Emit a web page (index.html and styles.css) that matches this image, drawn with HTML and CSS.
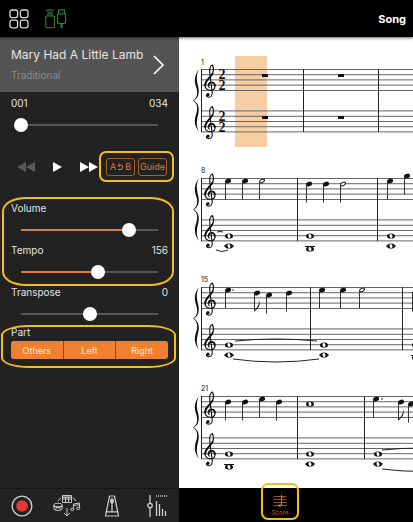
FILE: index.html
```
<!DOCTYPE html>
<html lang="en">
<head>
  <meta charset="UTF-8" />
  <meta name="viewport" content="width=device-width, initial-scale=1.0"/>
  <title>Song</title>
  <link rel="stylesheet" href="styles.css">
</head>
<body>
  <!-- Shared music symbols -->
  <svg class="symbols" aria-hidden="true">
    <defs>
      <g id="clef" fill="none" stroke="#111" stroke-linecap="round">
        <path stroke-width="1.1" d="M5.2 23.6C3.4 22 4.2 18 7.2 18C10.4 18 11.6 20.4 11 22.8C10.4 25.4 8.2 26.4 6 26.2C2.6 26 .6 23.4 .9 20.2C1.4 15.6 7 13 8.8 9C9.9 6.4 9.4 3 8.4 1C6.6 1.6 5.4 5 5.8 9L8.2 28.4C8.5 31.6 7 33.2 5 33.2C3.4 33.2 2.4 32.2 2.4 31"/>
        <path stroke-width="1.8" d="M1.3 21.5C1 16.6 6.6 13.4 8.6 9.4"/>
        <path stroke-width="1.6" d="M5 21C5.2 19 6.6 18.3 8 18.5C9.6 18.8 10.8 20.2 10.7 21.8"/>
        <circle cx="4" cy="30.7" r="1.6" fill="#111" stroke="none"/>
      </g>
      <path id="brace" fill="#111" d="M6 0C1 7 1 12 3.5 19C5 25 4 29 0 31.4C4 34 5 38 3.5 44C1 51 1 56 6 63C3 57 3.5 52 5.3 45C6.6 39 5.5 34 .8 31.4C5.5 29 6.6 24 5.3 18C3.5 11 3 6 6 0Z"/>
      <g id="system">
        <g class="lines">
          <rect x="22" y="30" width="100%" height="1"/>
          <rect x="22" y="35.2" width="100%" height="1"/>
          <rect x="22" y="40.4" width="100%" height="1"/>
          <rect x="22" y="45.6" width="100%" height="1"/>
          <rect x="22" y="51" width="100%" height="1"/>
          <rect x="22" y="71.4" width="100%" height="1"/>
          <rect x="22" y="76.8" width="100%" height="1"/>
          <rect x="22" y="82" width="100%" height="1"/>
          <rect x="22" y="87.2" width="100%" height="1"/>
          <rect x="22" y="92.4" width="100%" height="1"/>
        </g>
        <use href="#bar" x="22"/>
        <use href="#brace" x="14" y="30"/>
        <use href="#clef" x="25" y="25"/>
        <use href="#clef" x="25" y="66.5"/>
      </g>
      <rect id="bar" y="30" width="1" height="63" fill="#222"/>
      <g id="quarter">
        <ellipse rx="3.2" ry="2.3" transform="rotate(-25)"/>
        <rect x="-3" y="0" width="1" height="18.5" fill="#333"/>
      </g>
      <g id="eighth">
        <use href="#quarter"/>
        <path d="M-2.5 18.5C-1.5 14.5 3.5 13 1.6 6.5C4.4 12.5 1 15 -2.5 18.5Z"/>
      </g>
      <g id="half">
        <ellipse rx="2.7" ry="1.6" transform="rotate(-30)" fill="#fff" stroke="#111" stroke-width="1.1"/>
        <rect x="-3" y="0" width="1" height="18.5" fill="#333"/>
      </g>
      <g id="whole">
        <ellipse rx="4" ry="2.6"/>
        <ellipse rx="1.4" ry="2" transform="rotate(-20)" fill="#fff"/>
      </g>
      <g id="low-c">
        <rect x="-5" y="-.5" width="10" height="1"/>
        <use href="#whole"/>
      </g>
      <g id="low-b">
        <rect x="-5" y="-3" width="10" height="1"/>
        <use href="#whole"/>
      </g>
      <rect id="rest" width="6" height="3"/>
    </defs>
  </svg>

  <header class="topbar">
    <button class="icon-btn" aria-label="Menu">
      <svg width="20" height="20" fill="none" stroke="#d8d8d8" stroke-width="1.3">
        <rect x="1" y="1" width="7.6" height="7.6" rx="2"/>
        <rect x="11.4" y="1" width="7.6" height="7.6" rx="2"/>
        <rect x="1" y="11.2" width="7.6" height="7.6" rx="2"/>
        <rect x="11.4" y="11.2" width="7.6" height="7.6" rx="2"/>
      </svg>
    </button>
    <button class="icon-btn" aria-label="Connection">
      <svg width="22" height="20" fill="none" stroke="#2f8236" stroke-width="1.1">
        <path d="M1 1.8Q5 -.4 9 1.8M2.6 3.4Q5 2 7.4 3.4"/>
        <path d="M3 7V4.8H7V7M1.6 7H8.4Q9.4 7 9.4 8V17.4Q9.4 18.8 8 18.8H2Q.8 18.8 .8 17.4V8Q.8 7 1.6 7Z"/>
        <path d="M13.6 5V.8H19.6V5M12.6 5H20.6V12.4Q20.6 14.6 18.6 14.6H14.6Q12.6 14.6 12.6 12.4ZM15.2 2.4V3.6M18 2.4V3.6"/>
        <path stroke-width="2" d="M16.6 14.6V19"/>
      </svg>
    </button>
    <h1>Song</h1>
  </header>

  <main class="content">
    <section class="panel">
      <button class="song">
        <span class="song-text">
          <span class="song-title">Mary Had A Little Lamb</span>
          <span class="song-artist">Traditional</span>
        </span>
        <svg width="12" height="20" fill="none" stroke="#fff" stroke-width="1.6"><path d="M1 1L10 10L1 19"/></svg>
      </button>

      <div class="controls">
        <div class="row"><label for="position">001</label><span>034</span></div>
        <input type="range" id="position" min="1" max="34" value="1" style="--value: 0">

        <div class="transport">
          <button class="icon-btn" aria-label="Rewind">
            <svg width="18" height="10" fill="#5a5a5a"><path d="M9 0V10L0 5ZM18 0V10L9 5Z"/></svg>
          </button>
          <button class="icon-btn" aria-label="Play">
            <svg width="9" height="10" fill="#fff"><path d="M0 0V10L9 5Z"/></svg>
          </button>
          <button class="icon-btn" aria-label="Fast forward">
            <svg width="18" height="10" fill="#fff"><path d="M0 0V10L9 5ZM9 0V10L18 5Z"/></svg>
          </button>
          <div class="modes marked">
            <button class="mode" aria-label="A-B repeat">A<svg width="7" height="8" fill="none" stroke="currentColor"><path d="M1 6.5H4A2.2 2.2 0 0 0 4 2.2H1M2.8 .4L1 2.2L2.8 4"/></svg>B</button>
            <button class="mode">Guide</button>
          </div>
        </div>

        <div class="levels marked">
          <div class="row"><label for="volume">Volume</label></div>
          <input type="range" id="volume" class="filled" min="0" max="100" value="79" style="--value: 79">
          <div class="row"><label for="tempo">Tempo</label><span>156</span></div>
          <input type="range" id="tempo" class="filled" min="0" max="100" value="56" style="--value: 56">
        </div>

        <div class="row"><label for="transpose">Transpose</label><span>0</span></div>
        <input type="range" id="transpose" min="-12" max="12" value="0" style="--value: 50">

        <div class="parts marked">
          <div class="parts-label" id="partLabel">Part</div>
          <div class="segments" role="group" aria-labelledby="partLabel">
            <button aria-pressed="true">Others</button>
            <button aria-pressed="true">Left</button>
            <button aria-pressed="true">Right</button>
          </div>
        </div>
      </div>
    </section>

    <section class="score" aria-label="Score">
      <svg class="staff">
        <rect x="56" y="17" width="32" height="91" fill="#f7cda3"/>
        <use href="#system"/>
        <text x="22" y="26">1</text>
        <g class="time">
          <text x="43" y="40">2</text>
          <text x="43" y="51">2</text>
          <text x="43" y="82">2</text>
          <text x="43" y="93">2</text>
        </g>
        <use href="#bar" x="124"/>
        <use href="#bar" x="199"/>
        <use href="#rest" x="83" y="35"/>
        <use href="#rest" x="159" y="35"/>
        <use href="#rest" x="83" y="77"/>
        <use href="#rest" x="159" y="77"/>
      </svg>

      <svg class="staff">
        <use href="#system"/>
        <text x="22" y="25">8</text>
        <use href="#quarter" x="49" y="33"/>
        <use href="#quarter" x="66" y="33"/>
        <use href="#half" x="83" y="33"/>
        <use href="#bar" x="118"/>
        <use href="#quarter" x="130" y="36"/>
        <use href="#quarter" x="147" y="36"/>
        <use href="#half" x="164" y="36"/>
        <use href="#bar" x="198"/>
        <use href="#quarter" x="211" y="33"/>
        <use href="#quarter" x="228" y="28"/>
        <use href="#whole" x="50" y="88"/>
        <use href="#low-c" x="50" y="98"/>
        <use href="#whole" x="131" y="88"/>
        <use href="#low-b" x="131" y="101"/>
        <use href="#whole" x="212" y="88"/>
        <use href="#low-c" x="212" y="98"/>
        <path class="tie" d="M38 84Q41 83 44 84M37 102Q43 105 49 102"/>
      </svg>

      <svg class="staff">
        <use href="#system"/>
        <text x="22" y="25">15</text>
        <use href="#quarter" x="49" y="33"/>
        <circle cx="54" cy="33" r=".8"/>
        <use href="#eighth" x="78" y="36"/>
        <use href="#quarter" x="90" y="38"/>
        <use href="#quarter" x="110" y="36"/>
        <use href="#bar" x="131"/>
        <use href="#quarter" x="143" y="33"/>
        <use href="#quarter" x="164" y="33"/>
        <use href="#half" x="183" y="33"/>
        <use href="#bar" x="223"/>
        <use href="#quarter" x="236" y="36"/>
        <use href="#whole" x="50" y="88"/>
        <use href="#low-c" x="50" y="98"/>
        <use href="#whole" x="145" y="88"/>
        <use href="#low-c" x="145" y="98"/>
        <use href="#whole" x="237" y="88"/>
        <use href="#low-b" x="237" y="101"/>
        <path class="tie" d="M56 84Q97 80 138 84M54 102Q97 108 140 102"/>
      </svg>

      <svg class="staff">
        <use href="#system"/>
        <text x="22" y="25">21</text>
        <use href="#quarter" x="49" y="36"/>
        <use href="#quarter" x="66" y="36"/>
        <use href="#quarter" x="83" y="33"/>
        <use href="#quarter" x="100" y="36"/>
        <use href="#bar" x="118"/>
        <use href="#whole" x="131" y="38"/>
        <use href="#bar" x="185"/>
        <use href="#quarter" x="197" y="33"/>
        <circle cx="203" cy="33" r=".8"/>
        <use href="#eighth" x="222" y="36"/>
        <use href="#quarter" x="232" y="38"/>
        <use href="#whole" x="50" y="88"/>
        <use href="#low-b" x="50" y="101"/>
        <use href="#whole" x="131" y="88"/>
        <use href="#low-c" x="131" y="98"/>
        <use href="#whole" x="199" y="88"/>
        <use href="#low-c" x="199" y="98"/>
        <path class="tie" d="M203 84Q243 80 283 84M203 103Q243 108 283 103"/>
      </svg>
    </section>
  </main>

  <footer class="bottombar">
    <nav class="tools" aria-label="Tools">
      <button class="icon-btn" aria-label="Record">
        <svg width="22" height="22"><circle cx="11" cy="11" r="9.8" fill="none" stroke="#d4d4d4" stroke-width="1.3"/><circle cx="11" cy="11" r="5.8" fill="#ee3535"/></svg>
      </button>
      <button class="icon-btn" aria-label="Instruments">
        <svg width="28" height="22" fill="none" stroke="#c6c6c6">
          <path d="M9.5 .5H18.5V7.5H9.5ZM9.5 2H18.5M12.5 2V7.5M15.5 2V7.5M11 2V5M14 2V5M17 2V5M8 2.5L5 6M20 2.5L23 6"/>
          <ellipse cx="5" cy="10" rx="4.2" ry="1.8"/>
          <path d="M.8 10V13.5Q1 15.5 5 15.5T9.2 13.5V10M.8 11.5Q5 14 9.2 11.5M2.5 14.5L4 12M7.5 14.5L6 12"/>
          <path d="M20.5 14.2V9L26.5 8V13.2M20.5 10.6L26.5 9.6M14 13V21M11 18L14 21L17 18"/>
          <ellipse cx="19.2" cy="14.4" rx="1.6" ry="1.2"/><ellipse cx="25.2" cy="13.4" rx="1.6" ry="1.2"/>
        </svg>
      </button>
      <button class="icon-btn" aria-label="Metronome">
        <svg width="16" height="22" fill="none" stroke="#d0d0d0" stroke-width="1.2">
          <path d="M5.5 1H10.5L14.5 21H1.5ZM2.4 16.8H13.6M8 3V16.8"/><path fill="#d0d0d0" d="M6.5 5H9.5L8.8 8H7.2Z"/>
        </svg>
      </button>
      <button class="icon-btn" aria-label="Mixer">
        <svg width="20" height="22" fill="none" stroke="#d0d0d0" stroke-width="1.3">
          <path d="M3 0V8M3 13V22"/><circle cx="3" cy="10.5" r="2.2"/>
          <path d="M9.5 6V21M12.5 9V21M15.5 14V21M18.5 16V21"/>
          <path stroke-dasharray="1 1" d="M9 1H20"/>
        </svg>
      </button>
    </nav>
    <nav class="views" aria-label="Views">
      <button class="view marked">
        <svg width="14" height="13" fill="none" stroke="#9c5122">
          <path d="M.5 1.5H13.5M.5 4.5H13.5M.5 7.5H13.5M.5 10.5H13.5"/>
          <path stroke="#d96f25" d="M8.5 0V10M8.5 1L10.5 3"/><ellipse cx="6.8" cy="10.6" rx="1.6" ry="1.2" fill="#d96f25" stroke="none"/>
        </svg>
        Score
      </button>
    </nav>
  </footer>
</body>
</html>
```
FILE: styles.css
```
* {
  box-sizing: border-box;
}
body {
  margin: 0;
  min-height: 100vh;
  display: flex;
  flex-direction: column;
  background: #000;
  color: #e4e4e4;
  font-family: Inter, "Liberation Sans", sans-serif;
  font-size: 10px;
  overflow-x: hidden;
}
button {
  padding: 0;
  border: none;
  background: none;
  color: inherit;
  font-family: inherit;
}
svg {
  display: block;
  flex: none;
}
.symbols {
  position: absolute;
  width: 0;
  height: 0;
}

/* Yellow marker around a group of controls */
.marked {
  position: relative;
}
.marked::after {
  content: "";
  position: absolute;
  border: 2px solid #f2bf18;
  pointer-events: none;
}

.topbar {
  position: relative;
  z-index: 1;
  display: flex;
  align-items: center;
  gap: 16px;
  height: 37px;
  padding: 0 7px 0 9px;
  background: #000;
  box-shadow: 0 1px 3px rgba(0, 0, 0, 0.6);
}
.topbar h1 {
  margin: 0 0 0 auto;
  color: #fff;
  font-size: 11px;
  font-weight: 700;
}

.content {
  flex: 1;
  display: grid;
  grid-template-columns: 179px 1fr;
}
.panel {
  background: #222;
}
.song {
  display: flex;
  align-items: center;
  justify-content: space-between;
  width: 100%;
  height: 55px;
  padding: 0 14px 0 11px;
  background: #545454;
  text-align: left;
}
.song-text {
  display: flex;
  flex-direction: column;
  gap: 4px;
}
.song-title {
  font-size: 12px;
  line-height: 17px;
  white-space: nowrap;
}
.song-artist {
  color: #8a8a8a;
  font-size: 10px;
  line-height: 17px;
}

.controls {
  padding: 1px 11px 0;
}
.row {
  display: flex;
  justify-content: space-between;
  line-height: 21px;
}
input[type="range"] {
  -webkit-appearance: none;
  appearance: none;
  display: block;
  width: calc(100% - 6px);
  height: 21px;
  margin: 0 3px;
  background: linear-gradient(#555, #555) center / calc(100% - 14px) 2px no-repeat;
}
input[type="range"].filled {
  background-image: linear-gradient(to right, #dd7a3a calc(var(--value) * 1%), #555 0);
}
input[type="range"]::-webkit-slider-thumb {
  -webkit-appearance: none;
  width: 14px;
  height: 14px;
  border-radius: 50%;
  background: #fff;
}
input[type="range"]::-moz-range-thumb {
  width: 14px;
  height: 14px;
  border: none;
  border-radius: 50%;
  background: #fff;
}

.transport {
  display: flex;
  align-items: center;
  gap: 18px;
  height: 63px;
  padding-left: 6px;
}
.modes {
  display: flex;
  gap: 3px;
  margin-left: -10px;
}
.mode {
  display: flex;
  align-items: center;
  justify-content: center;
  gap: 1px;
  width: 29px;
  height: 18px;
  border: 1px solid #a85f2e;
  border-radius: 3px;
  color: #dd7c38;
  font-size: 9px;
}
.modes::after {
  inset: -7px -7px -6px -7px;
  border-radius: 7px;
}
.levels::after {
  inset: -1px -6px -4px -9px;
  border-radius: 24px / 14px;
}
.parts::after {
  inset: 1px -8px -9px -10px;
  border-radius: 28px / 10px;
}
.parts-label {
  line-height: 17px;
}
.segments {
  display: flex;
  gap: 1px;
  border-radius: 3px;
  background: #8a4a1e;
  overflow: hidden;
}
.segments button {
  flex: 1;
  height: 18px;
  background: #ef8030;
  color: #ffe9d8;
  font-size: 9px;
}

.score {
  min-width: 0;
  padding-top: 2px;
  background: #fff;
}
.staff {
  width: 100%;
  height: 109px;
  fill: #111;
  font-size: 7px;
}
.lines {
  fill: #666;
}
.time {
  font-family: "Liberation Serif", serif;
  font-size: 14px;
  font-weight: 700;
  text-anchor: middle;
}
.tie {
  fill: none;
  stroke: #222;
}

.bottombar {
  display: grid;
  grid-template-columns: 179px 1fr;
  height: 34px;
}
.tools {
  display: grid;
  grid-template-columns: repeat(4, 1fr);
  place-items: center;
  border-top: 1px solid #161616;
  background: #222;
}
.views {
  display: flex;
  align-items: center;
  padding-left: 86px;
}
.view {
  display: flex;
  flex-direction: column;
  align-items: center;
  gap: 1px;
  width: 30px;
  color: #b8602a;
  font-size: 6px;
  line-height: 7px;
}
.view::after {
  inset: -12px -4px -4px -4px;
  border-radius: 7px;
}
```
